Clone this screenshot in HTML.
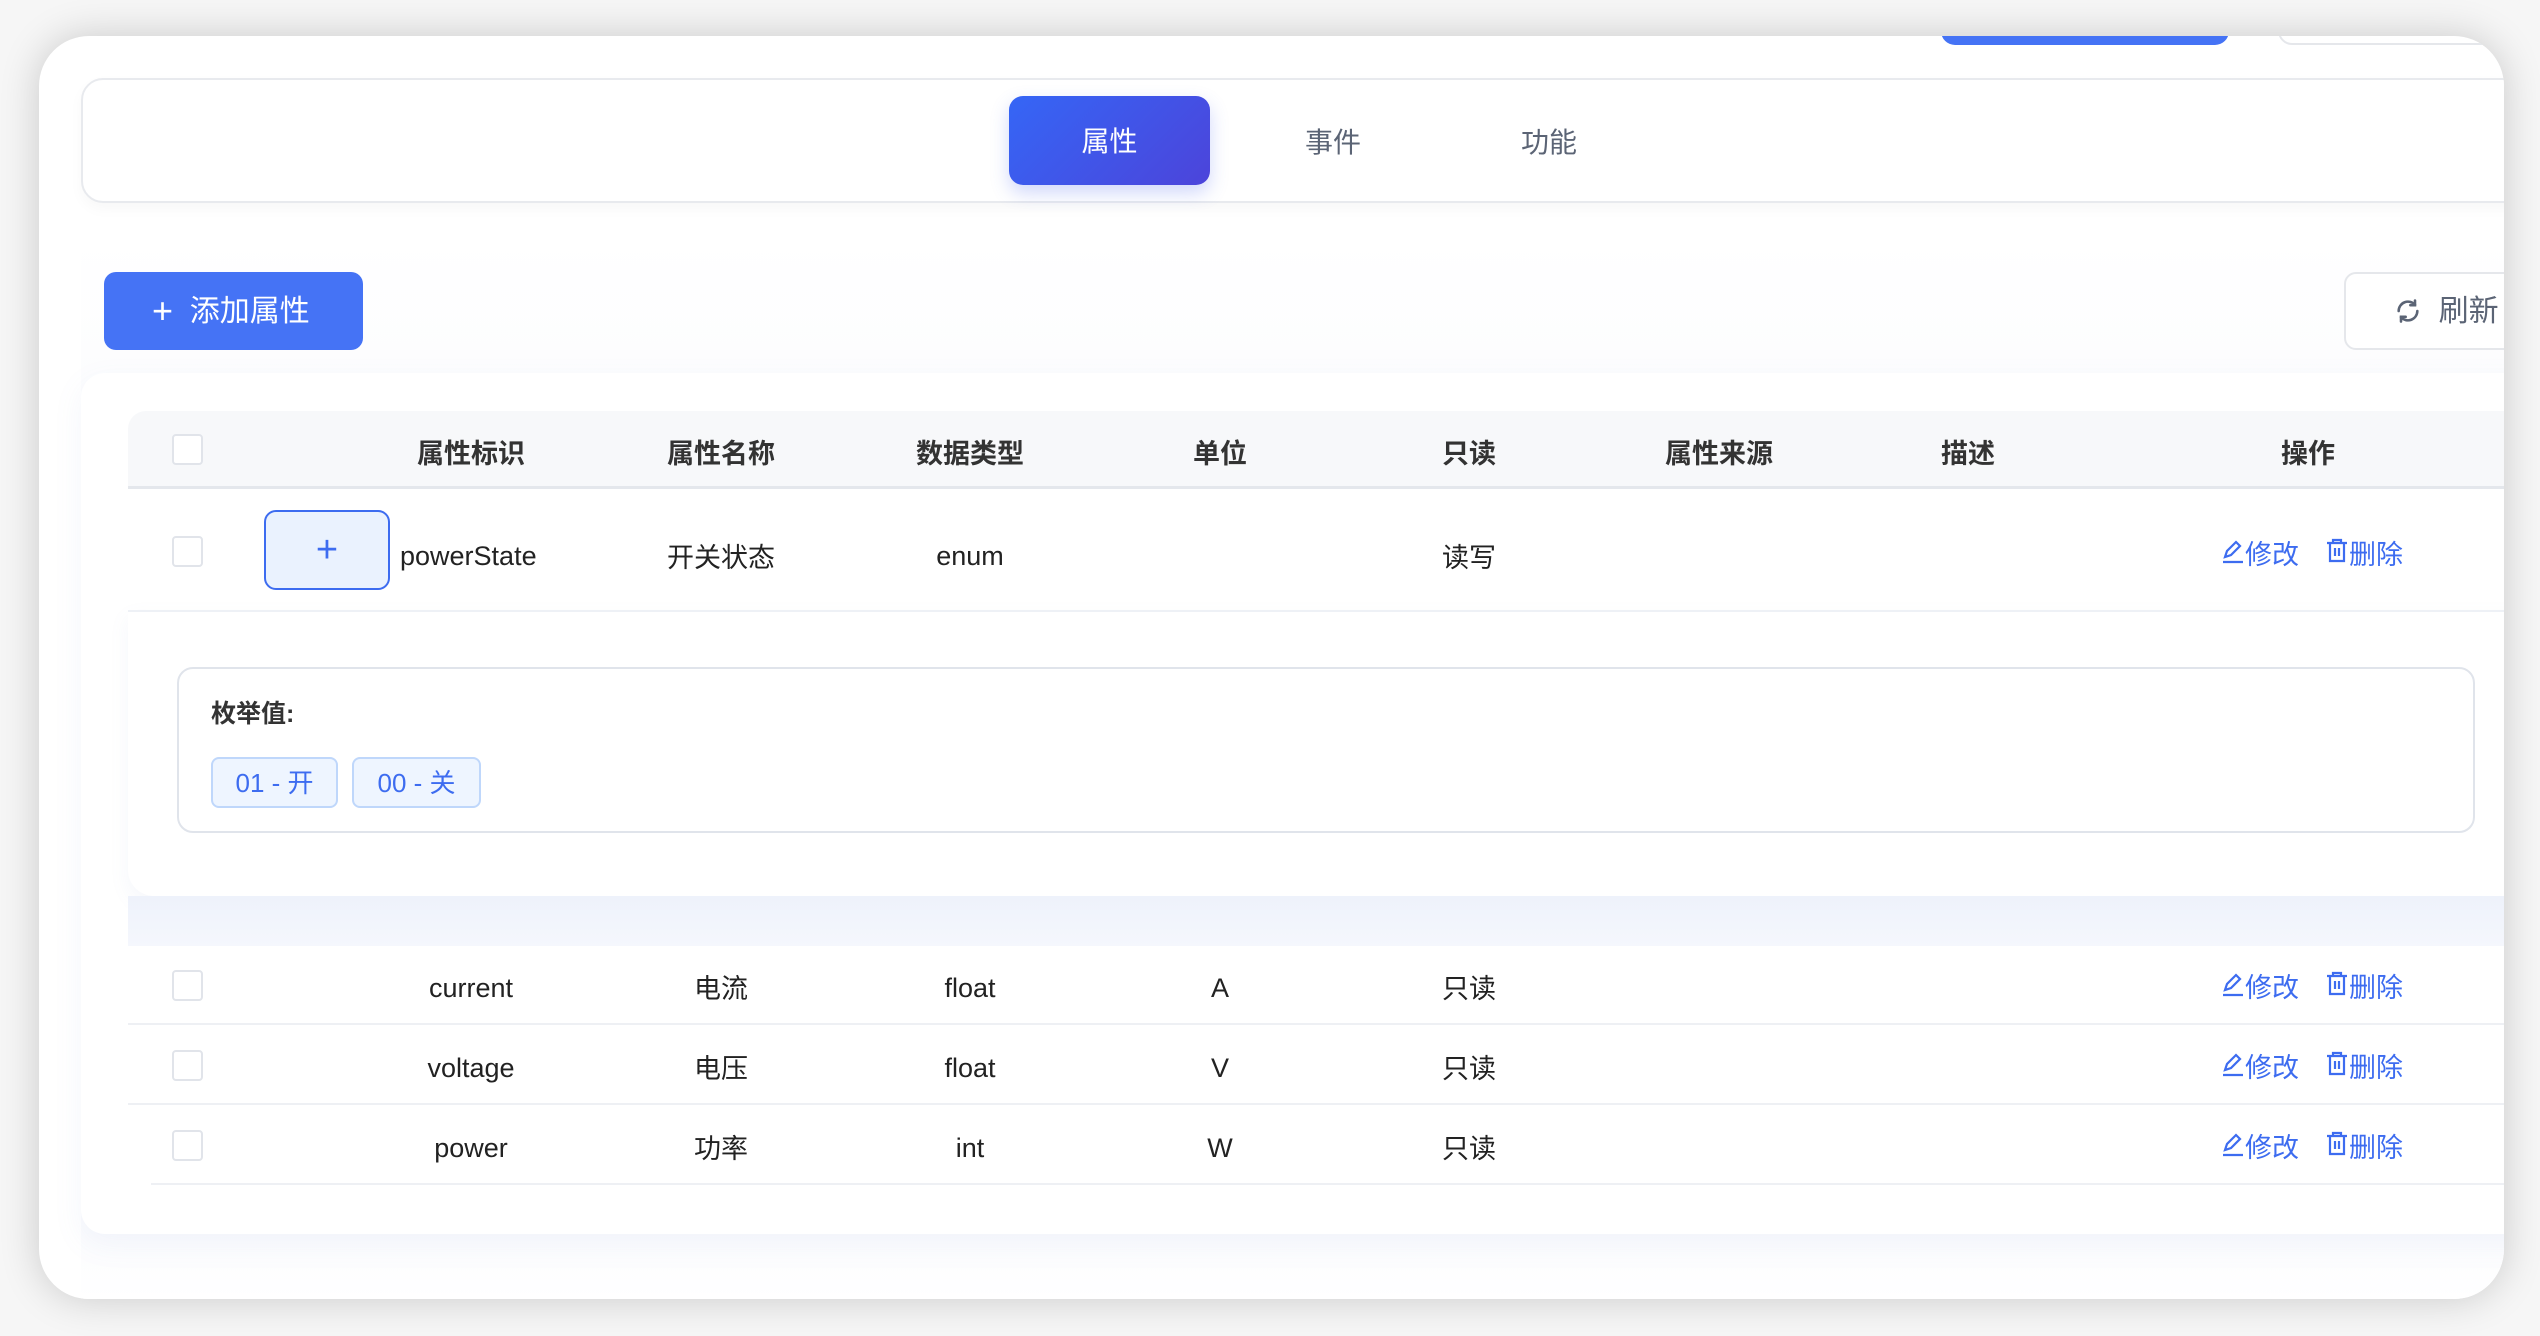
<!DOCTYPE html>
<html><head><meta charset="utf-8"><style>
*{box-sizing:border-box;margin:0;padding:0}
body{width:2540px;height:1336px;background:#f6f6f6;font-family:"Liberation Sans","Noto Sans CJK SC",sans-serif;position:relative;overflow:hidden}
.card{position:absolute;left:39px;top:36px;width:2465px;height:1263px;background:#fff;border-radius:50px;box-shadow:0 0 40px rgba(0,0,0,.18);overflow:hidden}
.a{position:absolute}
.c{position:absolute;transform:translateX(-50%);white-space:nowrap}
.cb{position:absolute;width:31px;height:31px;border:2px solid #e1e4ea;border-radius:4px;background:#fff}
.hd{font-weight:bold;color:#333;font-size:27px}
.td{color:#222;font-size:27px}
.l{margin-top:5px}
.op{position:absolute;color:#3d6cf0;font-size:27px;white-space:nowrap}
</style></head><body>
<div class="card">
  <div class="a" style="left:1902px;top:-20px;width:288px;height:29px;background:#4573f5;border-radius:0 0 14px 14px"></div>
  <div class="a" style="left:2239px;top:-20px;width:300px;height:29px;border:2px solid #e5e7eb;border-radius:0 0 14px 14px"></div>
  <div class="a" style="left:42px;top:42px;width:2500px;height:125px;border:2px solid #e8eaee;border-radius:22px;background:#fff;box-shadow:0 6px 14px rgba(0,0,0,.03)"></div>
  <div class="a" style="left:970px;top:60px;width:201px;height:89px;border-radius:14px;background:linear-gradient(135deg,#3566f6,#4c44da);box-shadow:0 8px 18px rgba(70,100,240,.25);color:#fff;font-size:28px;text-align:center;line-height:92px">属性</div>
  <div class="c" style="left:1294px;top:85px;font-size:28px;color:#5b6475">事件</div>
  <div class="c" style="left:1510px;top:85px;font-size:28px;color:#5b6475">功能</div>
  <div class="a" style="left:42px;top:200px;width:2500px;height:1063px;background:linear-gradient(#fff,#f8f9fd 35%,#f8f9fd 88%,#fff)"></div>
  <div class="a" style="left:65px;top:236px;width:259px;height:78px;background:#4573f5;border-radius:12px;color:#fff;font-size:30px;line-height:78px;padding-left:48px"><span style="font-size:36px;font-weight:300;vertical-align:-2px">+</span>&nbsp;&nbsp;添加属性</div>
  <div class="a" style="left:2305px;top:236px;width:240px;height:78px;border:2px solid #e5e7eb;border-radius:12px;background:#fff;color:#5b6475;font-size:30px;line-height:76px;padding-left:48px">
    <svg width="28" height="28" viewBox="0 0 24 24" style="vertical-align:-4px" fill="none" stroke="#5b6475" stroke-width="2.2" stroke-linecap="round"><path d="M20 12a8 8 0 0 1-14 5.3M4 12a8 8 0 0 1 14-5.3"/><path d="M18 3v4h-4M6 21v-4h4"/></svg>&nbsp;&nbsp;刷新</div>
  <div class="a" style="left:42px;top:337px;width:2500px;height:861px;background:#fff;border-radius:24px;box-shadow:0 10px 30px rgba(120,140,200,.08)"></div>
  <div class="a" style="left:89px;top:375px;width:2450px;height:78px;background:#f7f8fa;border-bottom:3px solid #e4e7ec;border-radius:18px 0 0 0"></div>
  <div class="cb" style="left:133px;top:398px"></div>
  <div class="c hd" style="left:432px;top:396px">属性标识</div>
  <div class="c hd" style="left:682px;top:396px">属性名称</div>
  <div class="c hd" style="left:931px;top:396px">数据类型</div>
  <div class="c hd" style="left:1181px;top:396px">单位</div>
  <div class="c hd" style="left:1430px;top:396px">只读</div>
  <div class="c hd" style="left:1680px;top:396px">属性来源</div>
  <div class="c hd" style="left:1929px;top:396px">描述</div>
  <div class="c hd" style="left:2269px;top:396px">操作</div>
  <div class="cb" style="left:133px;top:500px"></div>
  <div class="a" style="left:225px;top:474px;width:126px;height:80px;background:#eaf2fe;border:2px solid #3d6cf0;border-radius:12px;text-align:center;line-height:76px;font-size:38px;font-weight:300;color:#3d6cf0">+</div>
  <div class="a td" style="left:361px;top:505px">powerState</div>
  <div class="c td" style="left:682px;top:500px">开关状态</div>
  <div class="c td" style="left:931px;top:505px">enum</div>
  <div class="c td" style="left:1430px;top:500px">读写</div>
  <div class="op" style="left:2182px;top:497px"><svg width="24" height="26" viewBox="0 0 24 26" fill="none" stroke="#3d6cf0" stroke-width="2.2"><path d="M4 19l2-6L15 4l4 4-9 9z"/><path d="M2 24h20"/></svg>修改</div>
  <div class="op" style="left:2286px;top:497px"><svg width="24" height="26" viewBox="0 0 24 26" fill="none" stroke="#3d6cf0" stroke-width="2.2"><path d="M2 5h20M8 5V2h8v3M5 5v18h14V5M10 10v8M14 10v8"/></svg>删除</div>
  <div class="a" style="left:89px;top:574px;width:2450px;height:286px;background:#fff;border-top:2px solid #eef1f6;border-radius:0 0 0 26px;box-shadow:0 8px 20px rgba(120,140,200,.07)"></div>
  <div class="a" style="left:138px;top:631px;width:2298px;height:166px;border:2px solid #e0e4eb;border-radius:16px"></div>
  <div class="a" style="left:172px;top:658px;font-size:25px;font-weight:bold;color:#333">枚举值:</div>
  <div class="a" style="left:172px;top:721px;width:127px;height:51px;background:#eef5ff;border:2px solid #bfd7fb;border-radius:8px;color:#3d6cf0;font-size:26px;text-align:center;line-height:49px">01 - 开</div>
  <div class="a" style="left:313px;top:721px;width:129px;height:51px;background:#eef5ff;border:2px solid #bfd7fb;border-radius:8px;color:#3d6cf0;font-size:26px;text-align:center;line-height:49px">00 - 关</div>
  <div class="a" style="left:89px;top:860px;width:2450px;height:50px;background:linear-gradient(#eef2fb,#f5f7fd)"></div>
  <div class="a" style="left:89px;top:910px;width:2450px;height:239px;background:#fff"></div>
  <div class="a" style="left:89px;top:987px;width:2450px;height:2px;background:#eef0f4"></div>
  <div class="a" style="left:89px;top:1067px;width:2450px;height:2px;background:#eef0f4"></div>
  <div class="a" style="left:112px;top:1147px;width:2430px;height:2px;background:#eef0f4"></div>

  <div class="cb" style="left:133px;top:934px"></div>
  <div class="c td" style="left:432px;top:937px">current</div>
  <div class="c td" style="left:682px;top:931px">电流</div>
  <div class="c td" style="left:931px;top:937px">float</div>
  <div class="c td" style="left:1181px;top:937px">A</div>
  <div class="c td" style="left:1430px;top:931px">只读</div>
  <div class="op" style="left:2182px;top:930px"><svg width="24" height="26" viewBox="0 0 24 26" fill="none" stroke="#3d6cf0" stroke-width="2.2"><path d="M4 19l2-6L15 4l4 4-9 9z"/><path d="M2 24h20"/></svg>修改</div>
  <div class="op" style="left:2286px;top:930px"><svg width="24" height="26" viewBox="0 0 24 26" fill="none" stroke="#3d6cf0" stroke-width="2.2"><path d="M2 5h20M8 5V2h8v3M5 5v18h14V5M10 10v8M14 10v8"/></svg>删除</div>

  <div class="cb" style="left:133px;top:1014px"></div>
  <div class="c td" style="left:432px;top:1017px">voltage</div>
  <div class="c td" style="left:682px;top:1011px">电压</div>
  <div class="c td" style="left:931px;top:1017px">float</div>
  <div class="c td" style="left:1181px;top:1017px">V</div>
  <div class="c td" style="left:1430px;top:1011px">只读</div>
  <div class="op" style="left:2182px;top:1010px"><svg width="24" height="26" viewBox="0 0 24 26" fill="none" stroke="#3d6cf0" stroke-width="2.2"><path d="M4 19l2-6L15 4l4 4-9 9z"/><path d="M2 24h20"/></svg>修改</div>
  <div class="op" style="left:2286px;top:1010px"><svg width="24" height="26" viewBox="0 0 24 26" fill="none" stroke="#3d6cf0" stroke-width="2.2"><path d="M2 5h20M8 5V2h8v3M5 5v18h14V5M10 10v8M14 10v8"/></svg>删除</div>

  <div class="cb" style="left:133px;top:1094px"></div>
  <div class="c td" style="left:432px;top:1097px">power</div>
  <div class="c td" style="left:682px;top:1091px">功率</div>
  <div class="c td" style="left:931px;top:1097px">int</div>
  <div class="c td" style="left:1181px;top:1097px">W</div>
  <div class="c td" style="left:1430px;top:1091px">只读</div>
  <div class="op" style="left:2182px;top:1090px"><svg width="24" height="26" viewBox="0 0 24 26" fill="none" stroke="#3d6cf0" stroke-width="2.2"><path d="M4 19l2-6L15 4l4 4-9 9z"/><path d="M2 24h20"/></svg>修改</div>
  <div class="op" style="left:2286px;top:1090px"><svg width="24" height="26" viewBox="0 0 24 26" fill="none" stroke="#3d6cf0" stroke-width="2.2"><path d="M2 5h20M8 5V2h8v3M5 5v18h14V5M10 10v8M14 10v8"/></svg>删除</div>
</div>
</body></html>
